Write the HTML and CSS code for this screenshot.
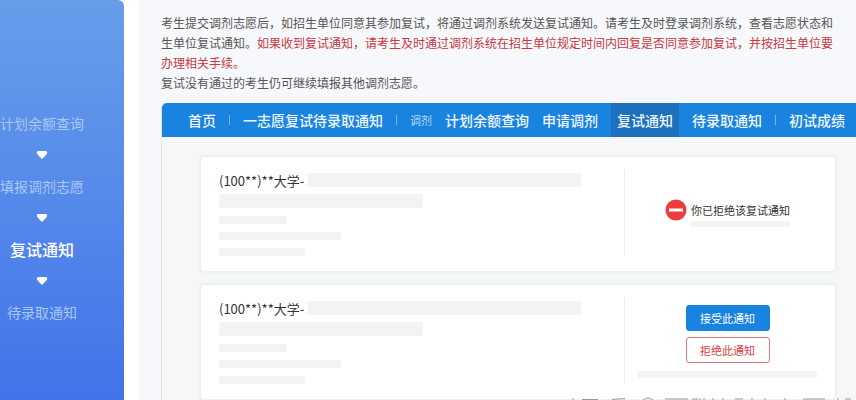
FILE: index.html
```
<!DOCTYPE html>
<html lang="zh-CN">
<head>
    <meta charset="UTF-8">
    <title>复试通知</title>
    <meta name="viewport" content="width=device-width, initial-scale=1.0">
    <link rel="stylesheet" href="styles.css">
</head>
<body>
    <aside class="sidebar">
        <a href="#" class="step">计划余额查询</a>
        <svg class="arrow" viewBox="0 0 12 8"><path d="M2.5 0h7Q12 0 11 2.5Q9 5.5 6 8Q3 5.5 1 2.5Q0 0 2.5 0z" fill="#fff"/></svg>
        <a href="#" class="step">填报调剂志愿</a>
        <svg class="arrow" viewBox="0 0 12 8"><path d="M2.5 0h7Q12 0 11 2.5Q9 5.5 6 8Q3 5.5 1 2.5Q0 0 2.5 0z" fill="#fff"/></svg>
        <a href="#" class="step current">复试通知</a>
        <svg class="arrow" viewBox="0 0 12 8"><path d="M2.5 0h7Q12 0 11 2.5Q9 5.5 6 8Q3 5.5 1 2.5Q0 0 2.5 0z" fill="#fff"/></svg>
        <a href="#" class="step">待录取通知</a>
    </aside>
    <main class="content">
        <p class="intro">考生提交调剂志愿后，如招生单位同意其参加复试，将通过调剂系统发送复试通知。请考生及时登录调剂系统，查看志愿状态和<br>生单位复试通知。<span class="warn">如果收到复试通知，请考生及时通过调剂系统在招生单位规定时间内回复是否同意参加复试，并按招生单位要<br>办理相关手续。</span><br>复试没有通过的考生仍可继续填报其他调剂志愿。</p>
        <section class="window">
            <nav class="navbar">
                <a href="#">首页</a>
                <span class="sep"></span>
                <a href="#">一志愿复试待录取通知</a>
                <span class="sep"></span>
                <span class="group">调剂</span>
                <a href="#">计划余额查询</a>
                <a href="#">申请调剂</a>
                <a href="#" class="active">复试通知</a>
                <a href="#">待录取通知</a>
                <span class="sep"></span>
                <a href="#">初试成绩</a>
            </nav>
            <div class="notices">
                <article class="card">
                    <div class="info">
                        <div class="title"><h2>(100**)**大学-</h2><span class="bar"></span></div>
                        <div class="bar major"></div>
                        <div class="bar line short"></div>
                        <div class="bar line long"></div>
                        <div class="bar line"></div>
                    </div>
                    <div class="action">
                        <div class="refused">
                            <svg width="22" height="22" viewBox="0 0 22 22"><circle cx="11" cy="11" r="10.5" fill="#ee3b3f"/><rect x="4" y="9.5" width="14" height="3" fill="#fff"/></svg>
                            <div>
                                <span>你已拒绝该复试通知</span>
                                <div class="bar time"></div>
                            </div>
                        </div>
                    </div>
                </article>
                <article class="card">
                    <div class="info">
                        <div class="title"><h2>(100**)**大学-</h2><span class="bar"></span></div>
                        <div class="bar major"></div>
                        <div class="bar line short"></div>
                        <div class="bar line long"></div>
                        <div class="bar line"></div>
                    </div>
                    <div class="action">
                        <button type="button" class="btn accept">接受此通知</button>
                        <button type="button" class="btn refuse">拒绝此通知</button>
                        <div class="bar deadline"></div>
                    </div>
                </article>
            </div>
        </section>
    </main>
    <svg class="mark" width="286" height="3" viewBox="0 0 286 3" aria-hidden="true">
        <path d="M3 1v2M12 2.5h16M42 2.500l13-1M73 3q5-4 10 0M95 2h23M122 2h6M130 1v2M134 1v2M143 1v2M153 1v2M165 2h8M182 1v2M195 1v2M215 1v2M233 2h22M268 1v2M275 2h6" fill="none" stroke="#999" stroke-width="1"/>
    </svg>
</body>
</html>
```
FILE: styles.css
```
* { box-sizing: border-box; }
body {
    margin: 0;
    min-height: 100vh;
    display: flex;
    gap: 14px;
    overflow: hidden;
    background: #fff;
    color: #555;
    font-family: "Noto Sans CJK SC", sans-serif;
}
a {
    color: inherit;
    text-decoration: none;
}
.sidebar {
    flex: 0 0 124px;
    padding: 112px 40px 0 0;
    display: flex;
    flex-direction: column;
    align-items: center;
    gap: 16px;
    border-radius: 0 6px 0 0;
    background: linear-gradient(#669ee9, #5589ea 50%, #4273e9);
    white-space: nowrap;
}
.step {
    font-size: 14px;
    line-height: 23px;
    color: #a9c6f7;
}
.step.current {
    font-size: 16px;
    font-weight: 500;
    color: #fff;
}
.arrow {
    width: 12px;
    height: 8px;
}
.content {
    flex: 1;
    min-width: 0;
    padding: 13px 0 0 23px;
    background: #f7f8fb;
}
.intro {
    margin: 0 0 10px;
    font-size: 12px;
    line-height: 20px;
    white-space: nowrap;
}
.warn {
    color: #c5393f;
}
.window {
    border-left: 1px solid #dfe3e8;
    border-radius: 5px 0 0 0;
    background: #f5f7f9;
}
.navbar {
    height: 34px;
    padding-left: 26px;
    display: flex;
    align-items: center;
    gap: 13px;
    background: #1983e0;
    border-radius: 5px 0 0 0;
    color: #f0f7ff;
    font-size: 14px;
    line-height: 34px;
    white-space: nowrap;
}
.navbar a {
    font-weight: 500;
}
.navbar .active {
    padding: 0 6px;
    background: #1c70bd;
}
.sep {
    width: 1px;
    height: 10px;
    background: #76b5ee;
}
.group {
    font-size: 11px;
    color: #b5d7f6;
}
.notices {
    padding: 20px 21px 2px 39px;
    display: flex;
    flex-direction: column;
    gap: 14px;
}
.card {
    min-height: 114px;
    padding: 13px 18px 15px;
    display: flex;
    background: #fff;
    border-radius: 4px;
    box-shadow: 0 0 4px #dfe3e6;
}
.info {
    flex: 1;
}
.title {
    display: flex;
    align-items: center;
    gap: 4px;
    height: 20px;
    margin-bottom: 4px;
}
.title h2 {
    margin: 0;
    font-size: 13px;
    font-weight: 400;
    color: #333;
}
.title .bar {
    flex: 1;
    height: 14px;
    margin-right: 43px;
}
.bar {
    background: #f3f3f4;
}
.major {
    width: 204px;
    height: 14px;
}
.line {
    width: 86px;
    height: 8px;
    margin-top: 8px;
}
.short {
    width: 68px;
}
.long {
    width: 122px;
}
.action {
    flex: 0 0 193px;
    padding-left: 13px;
    display: flex;
    flex-direction: column;
    align-items: center;
    justify-content: center;
    border-left: 1px solid #eee;
}
.refused {
    display: flex;
    align-items: flex-start;
    gap: 4px;
    color: #333;
    font-size: 11px;
    line-height: 22px;
}
.time {
    height: 6px;
}
.btn {
    width: 84px;
    height: 26px;
    margin-bottom: 6px;
    padding: 0;
    border: 1px solid #1983e0;
    border-radius: 3px;
    background: #1983e0;
    color: #fff;
    font-family: inherit;
    font-size: 11px;
}
.refuse {
    border-color: #d9777c;
    background: #fff;
    color: #dc3b42;
}
.deadline {
    width: 100%;
    height: 7px;
    margin-top: 2px;
}
/* faint strip over the bottom edge of the page */
.mark {
    position: absolute;
    right: 0;
    bottom: 0;
}
```
